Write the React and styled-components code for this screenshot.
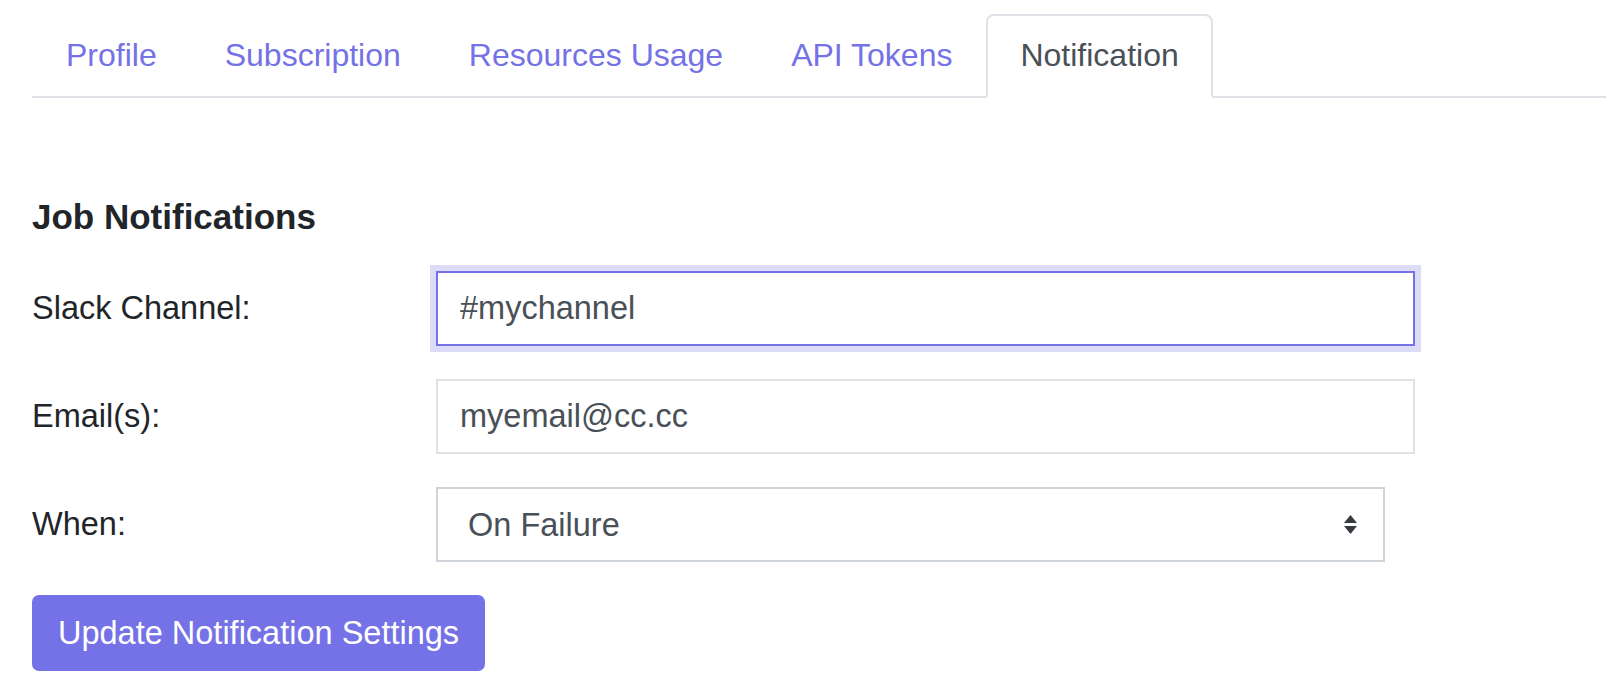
import React, { useState } from "react"
import styled, { createGlobalStyle } from "styled-components";

const GlobalStyle = createGlobalStyle`
    body {
        margin: 0;
        background: #fff;
        font-family: "Liberation Sans", Arial, Helvetica, sans-serif;
        color: #212529;
    }
`

const Page = styled.div`
    padding: 14px 0 0 32px;
`

const Tabs = styled.ul`
    display: flex;
    margin: 0;
    padding: 0;
    list-style: none;
    border-bottom: 2px solid #dee2e6;
`

const Tab = styled.li`
    margin-bottom: -2px;
`

const TabLink = styled.a`
    display: block;
    padding: 15px 32px 17px;
    font-size: 32px;
    line-height: 1.5;
    text-decoration: none;
    cursor: pointer;
    border: 2px solid ${(p) => (p.$active ? "#dee2e6" : "transparent")};
    border-bottom-color: ${(p) => (p.$active ? "#fff" : "transparent")};
    border-radius: 8px 8px 0 0;
    background: ${(p) => (p.$active ? "#fff" : "transparent")};
    color: ${(p) => (p.$active ? "#495057" : "#7571e6")};
`

const Content = styled.div`
    padding-top: 98px;
`

const Heading = styled.h5`
    margin: 0 0 33px;
    font-size: 35px;
    font-weight: 700;
    line-height: 1.2;
    color: #212529;
`

const Form = styled.form`
    display: flex;
    flex-direction: column;
    gap: 33px;
    align-items: flex-start;
`

const Row = styled.div`
    display: grid;
    grid-template-columns: 404px 979px;
    align-items: center;
`

const Label = styled.label`
    font-size: 32.5px;
    color: #212529;
`

const Input = styled.input`
    box-sizing: border-box;
    width: 100%;
    height: 75px;
    padding: 0 22px;
    font-family: inherit;
    font-size: 32.5px;
    color: #495057;
    background: #fff;
    border: 2px solid ${(p) => (p.$focused ? "#7571e6" : "#dee2e6")};
    border-radius: 0;
    box-shadow: ${(p) => (p.$focused ? "0 0 0 6px #dcdbf8" : "none")};
    outline: none;
`

const SelectWrap = styled.div`
    position: relative;
    width: 949px;
`

const Select = styled.select`
    box-sizing: border-box;
    width: 100%;
    height: 75px;
    padding: 0 60px 0 30px;
    font-family: inherit;
    font-size: 32.5px;
    color: #495057;
    background: #fff;
    border: 2px solid #ced4da;
    border-radius: 0;
    appearance: none;
    outline: none;
`

const Arrows = styled.svg`
    position: absolute;
    right: 28px;
    top: 50%;
    transform: translateY(-50%);
    pointer-events: none;
`

const Button = styled.button`
    box-sizing: border-box;
    height: 76px;
    padding: 0 24px;
    font-family: inherit;
    font-size: 32.5px;
    color: #fff;
    background: #7571e6;
    border: 2px solid #7571e6;
    border-radius: 7px;
    cursor: pointer;
`

const tabs = ["Profile", "Subscription", "Resources Usage", "API Tokens", "Notification"];

const App = () => {
    const [slack, setSlack] = useState("#mychannel");
    const [email, setEmail] = useState("myemail@cc.cc");
    const [when, setWhen] = useState("failure");

    return (
        <Page>
            <GlobalStyle />
            <Tabs>
                {tabs.map((t) => (
                    <Tab key={t}>
                        <TabLink $active={t === "Notification"}>{t}</TabLink>
                    </Tab>
                ))}
            </Tabs>
            <Content>
                <Heading>Job Notifications</Heading>
                <Form onSubmit={(e) => e.preventDefault()}>
                    <Row>
                        <Label>Slack Channel:</Label>
                        <Input $focused value={slack} onChange={(e) => setSlack(e.target.value)} />
                    </Row>
                    <Row>
                        <Label>Email(s):</Label>
                        <Input value={email} onChange={(e) => setEmail(e.target.value)} />
                    </Row>
                    <Row>
                        <Label>When:</Label>
                        <SelectWrap>
                            <Select value={when} onChange={(e) => setWhen(e.target.value)}>
                                <option value="failure">On Failure</option>
                                <option value="success">On Success</option>
                                <option value="always">Always</option>
                            </Select>
                            <Arrows width="13" height="20" viewBox="0 0 13 20">
                                <path d="M6.5 0 L13 8 L0 8 Z" fill="#343a40" />
                                <path d="M0 11 L13 11 L6.5 19 Z" fill="#343a40" />
                            </Arrows>
                        </SelectWrap>
                    </Row>
                    <Button type="submit">Update Notification Settings</Button>
                </Form>
            </Content>
        </Page>
    )
};

export default App;
